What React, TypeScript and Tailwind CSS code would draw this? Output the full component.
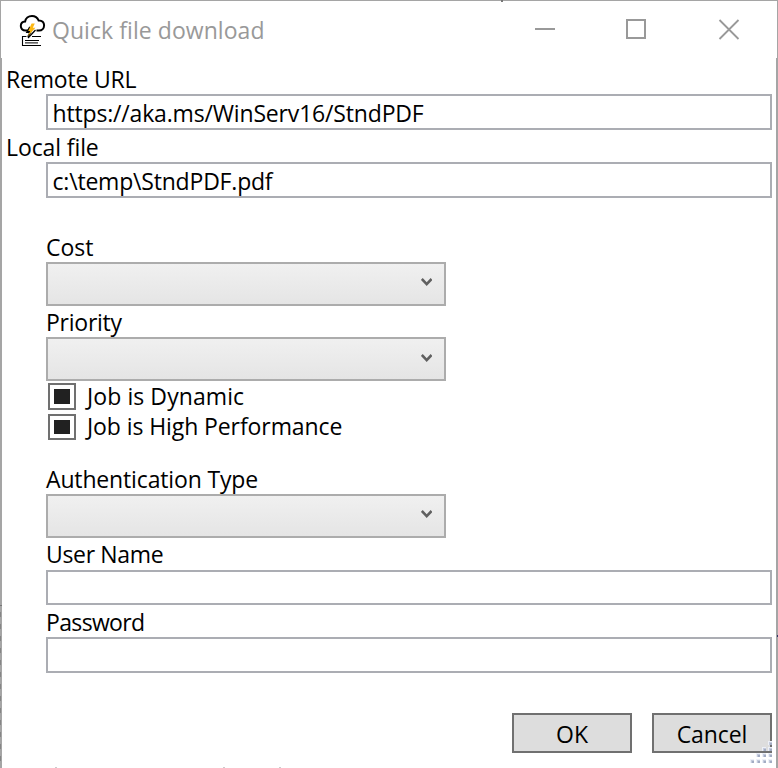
import React from "react";

function CloudIcon() {
  return (
    <svg width="28" height="32" viewBox="0 0 28 32" fill="none" className="shrink-0">
      <path
        d="M9 16.6H6.5C3.5 16.6 1.8 14.4 1.8 12.1C1.8 9.6 3.7 7.8 6.1 7.6C6.5 4.4 9.4 2 13 2C16.2 2 18.4 3.6 19.6 6.4C23.2 6.2 25.1 8.5 25.1 11.3C25.1 14.3 23 16.6 20 16.6H17.5"
        stroke="#000"
        strokeWidth="2"
      />
      <path d="M11 13L8.2 18H11.5L9 23" stroke="#000" strokeWidth="1.8" />
      <path d="M12.6 9.5H15.8L13.8 13.8H16.4L8.6 22.6L11.2 17H9.2Z" fill="#fdb813" />
      <path d="M16.5 16L9 24" stroke="#000" strokeWidth="1.2" />
      <path d="M7.5 22.5H3.5V31.5H22" stroke="#000" strokeWidth="1.1" />
      <path d="M13 22.5H22M6 26.5H20M6 28.9H19" stroke="#000" strokeWidth="1" />
    </svg>
  );
}

function TextField({ value, className, textClass = "" }: { value: string; className: string; textClass?: string }) {
  return (
    <div className={`ml-[44px] mr-1 shrink-0 border-2 border-[#abadb3] bg-white pl-[4.5px] pt-px leading-[32px] ${className}`}>
      <span className={textClass}>{value}</span>
    </div>
  );
}

function ComboBox({ arrow }: { arrow: string }) {
  return (
    <div className="ml-[44px] flex h-[44px] w-[400px] shrink-0 items-start justify-end border-2 border-[#acacac] bg-linear-to-b from-[#f0f0f0] to-[#e5e5e5] pr-3">
      <svg width="11" height="9" viewBox="0 0 11 9" fill="none" className={arrow}>
        <path d="M0.8 1L5.7 6.2L10.6 1" stroke="#606060" strokeWidth="2.6" />
      </svg>
    </div>
  );
}

function CheckRow({ label, row, box, mark, textClass }: { label: string; row: string; box: string; mark: string; textClass: string }) {
  return (
    <div className={`ml-[46px] flex shrink-0 items-start ${row}`}>
      <div className={`flex w-7 items-start border-2 border-[#707070] pl-1 pt-1 ${box}`}>
        <div className={`w-4 bg-[#212121] ${mark}`} />
      </div>
      <span className={`ml-[11px] leading-[28px] ${textClass}`}>{label}</span>
    </div>
  );
}

function ResizeGrip() {
  const cells = [[3, 0], [2, 1], [3, 1], [1, 2], [2, 2], [3, 2], [0, 3], [1, 3], [2, 3], [3, 3]];
  return (
    <svg width="22" height="23" viewBox="0 0 22 23" className="absolute bottom-[4px] right-[6px]">
      {cells.map(([x, y]) => (
        <g key={`${x}-${y}`}>
          <rect x={x * 6} y={y * 6} width="4" height="4" fill="#edf0f8" />
          <rect x={x * 6 + 1} y={y * 6 + 1} width="3" height="3" fill="#c4cbdc" />
          <rect x={x * 6 + 2} y={y * 6 + 2} width="2" height="2" fill="#a3acc3" />
        </g>
      ))}
    </svg>
  );
}

export default function App() {
  return (
    <div className="relative flex h-[768px] w-[778px] flex-col overflow-hidden whitespace-nowrap bg-white font-['Open_Sans',sans-serif] text-[23px] text-black">
      <header className="flex h-[58px] shrink-0 items-start border-x border-t border-[#a5a5a5]">
        <div className="ml-[18px] mt-[13px]"><CloudIcon /></div>
        <span className="ml-[5px] mt-[13px] leading-[32px] tracking-[0.06px] text-[#999]">Quick file download</span>
        <div className="ml-auto mr-[36px] mt-[18px] flex items-start">
          <svg width="206" height="21" viewBox="0 0 206 21" fill="none" stroke="#999" strokeWidth="2">
            <path d="M0 10H20M92 1H110V19H92Z" />
            <path d="M184.5 1L203.5 20M203.5 1L184.5 20" strokeWidth="1.8" />
          </svg>
        </div>
      </header>
      <main className="flex grow flex-col border-x-2 border-[#a5a5a5]">
        <div className="ml-1 h-[36px] shrink-0 pt-[5px] leading-[32px]"><span className="tracking-[-0.2px]">Remote URL</span></div>
        <TextField value="https://aka.ms/WinServ16/StndPDF" className="h-[36px]" textClass="tracking-[-0.17px]" />
        <div className="ml-1 h-[32px] shrink-0 pt-px leading-[32px]"><span className="tracking-[-0.1px]">Local file</span></div>
        <TextField value="c:\temp\StndPDF.pdf" className="h-[36px]" textClass="tracking-[-0.2px]" />
        <div className="ml-[44px] mt-[32px] h-[32px] shrink-0 pt-px leading-[32px]"><span>Cost</span></div>
        <ComboBox arrow="mt-[14px]" />
        <div className="ml-[44px] h-[31px] shrink-0 leading-[32px]"><span className="tracking-[-0.25px]">Priority</span></div>
        <ComboBox arrow="mt-[15px]" />
        <CheckRow label="Job is Dynamic" row="mt-[2px] h-[31px]" box="h-[27px]" mark="h-[15px]" textClass="-mt-[1px] tracking-[0.08px]" />
        <CheckRow label="Job is High Performance" row="h-[26px]" box="h-[26px]" mark="h-[14px]" textClass="-mt-[2px] tracking-[-0.09px]" />
        <div className="ml-[44px] mt-[22px] h-[32px] shrink-0 pt-px leading-[32px]"><span className="tracking-[-0.15px]">Authentication Type</span></div>
        <ComboBox arrow="mt-[14px]" />
        <div className="ml-[44px] h-[32px] shrink-0 leading-[32px]"><span className="tracking-[-0.33px]">User Name</span></div>
        <TextField value="" className="h-[35px]" />
        <div className="ml-[44px] h-[32px] shrink-0 pt-px leading-[32px]"><span className="tracking-[-0.65px]">Password</span></div>
        <TextField value="" className="h-[36px]" />
        <div className="mr-1 mt-[40px] flex justify-end gap-5">
          <button className="h-[40px] w-[120px] border-2 border-[#707070] bg-[#ddd] pt-px leading-[34px]"><span>OK</span></button>
          <button className="h-[40px] w-[120px] border-2 border-[#707070] bg-[#ddd] pt-px leading-[34px]"><span className="tracking-[-0.1px]">Cancel</span></button>
        </div>
      </main>
      <ResizeGrip />
      {/* traces of the window behind, showing along the frame */}
      <div className="absolute left-0 top-[605px] h-[163px] w-px bg-[repeating-linear-gradient(to_bottom,#a5a5a5_0px_7px,#858585_7px_12px)]" />
      <div className="absolute left-0 top-[605px] h-px w-[2px] bg-[#777]" />
      <div className="absolute left-[501px] top-0 h-[2px] w-[2px] bg-[#777]" />
      <div className="absolute right-0 top-[635px] h-[2px] w-px bg-[#333366]" />
      <div className="absolute bottom-0 left-[55px] h-px w-[2px] bg-[#ccc]" />
      <div className="absolute bottom-0 left-[223px] h-px w-[2px] bg-[#ccc]" />
      <div className="absolute bottom-0 left-[279px] h-px w-[2px] bg-[#ccc]" />
    </div>
  );
}
